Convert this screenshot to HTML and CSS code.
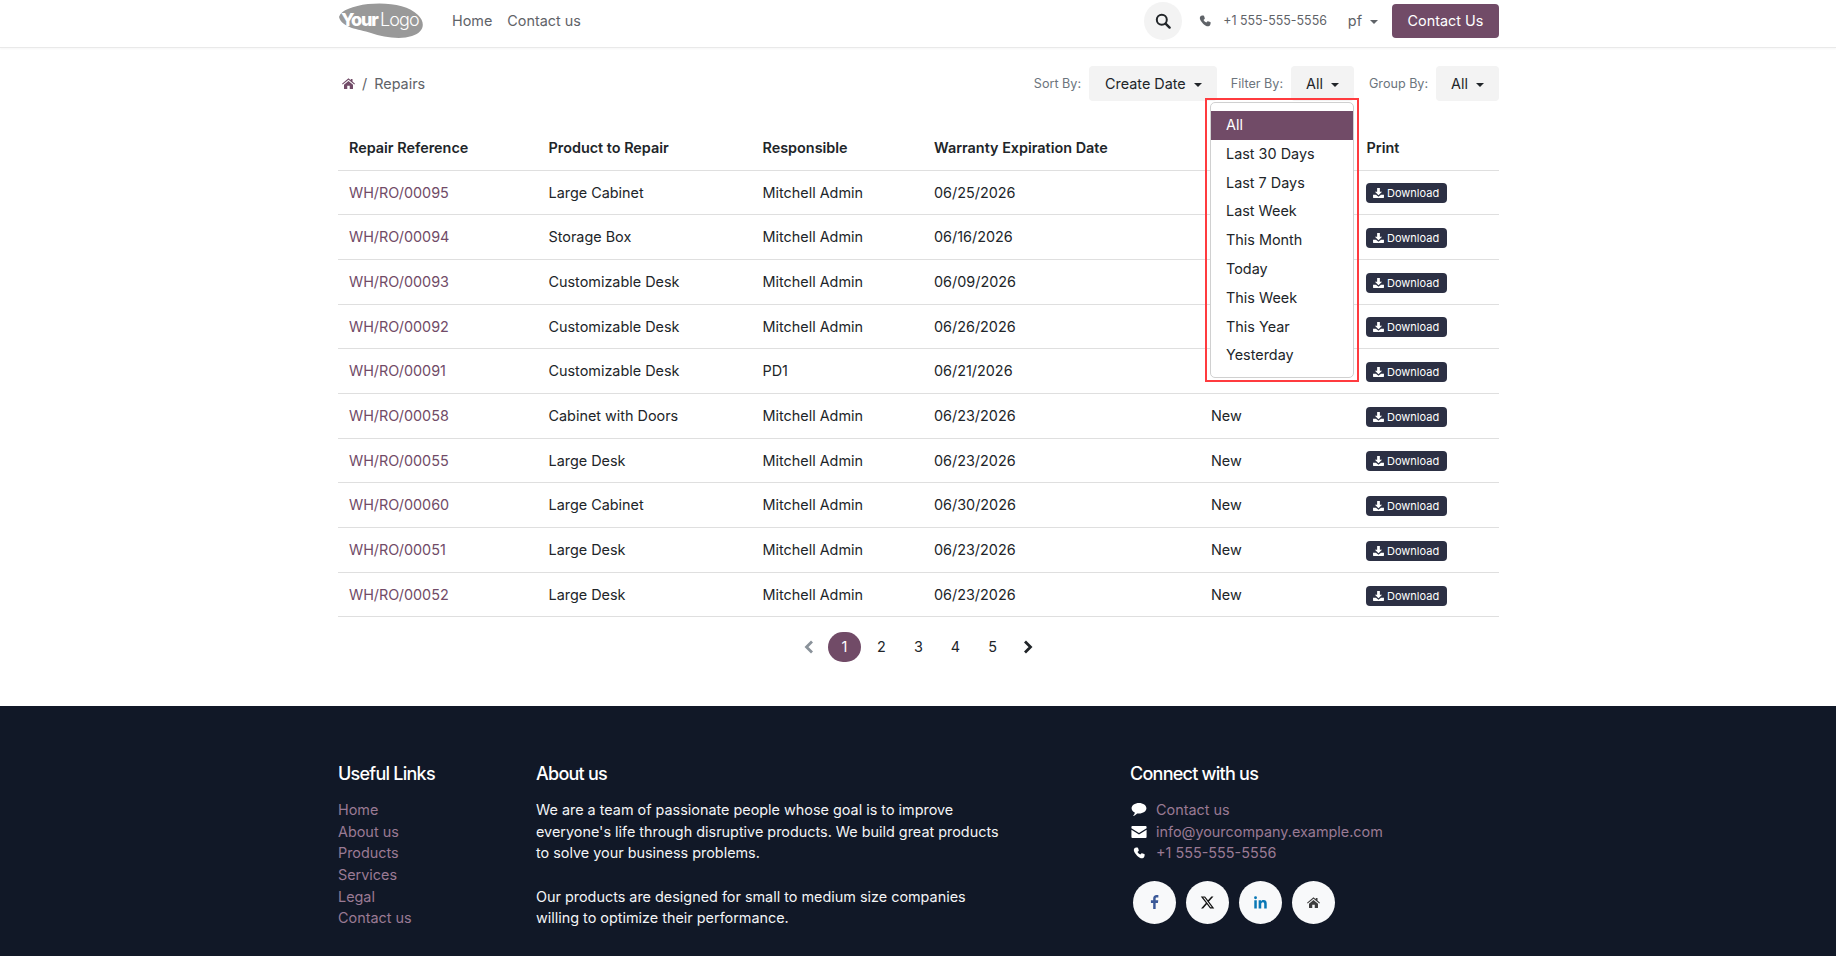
FILE: index.html
```html
<!DOCTYPE html>
<html lang="en">

<head>
    <meta charset="UTF-8">
    <meta name="viewport" content="width=device-width, initial-scale=1.0">
    <title>Repairs</title>
    <link rel="stylesheet" href="styles.css">
</head>

<body>

    <svg class="icon-defs" width="0" height="0">
        <symbol id="i-home" viewBox="0 0 26 22">
            <path d="M13 0.5 L17.5 4.3 V1.8 H21 V7.2 L26 11.4 L24.6 13 L13 3.4 L1.4 13 L0 11.4 Z M4 13.4 L13 6 L22 13.4 V21 Q22 22 21 22 H15.5 V15.5 H10.5 V22 H5 Q4 22 4 21 Z" fill="currentColor"/>
        </symbol>
        <symbol id="i-phone" viewBox="0 0 24 24">
            <path d="M6.2 1.2 L9 1 Q9.8 1 10.1 1.8 L11.6 6.6 Q11.8 7.3 11.2 7.8 L9 9.8 Q10.8 13.5 14.6 15.2 L16.6 13 Q17.1 12.4 17.9 12.7 L22.6 14.2 Q23.3 14.5 23.3 15.3 L23 18.2 Q22.6 21.6 19.2 22.6 Q16.8 23.2 12.6 20.8 Q7.4 18 3.8 12.2 Q1 7.4 1.7 4.8 Q2.6 1.6 6.2 1.2 Z" fill="currentColor"/>
        </symbol>
        <symbol id="i-download" viewBox="0 0 24 22">
            <path d="M9 0 H15 V8 H20 L12 16 L4 8 H9 Z M0 15 H6.5 L12 19.5 L17.5 15 H24 V21 Q24 22 23 22 H1 Q0 22 0 21 Z" fill="currentColor"/>
        </symbol>
    </svg>

    <header class="site-header">
        <div class="container header-row">
            <a class="logo" href="#">
                <svg width="86" height="36" viewBox="0 0 86 36">
                    <path d="M1 14 C3 7 15 3 30 1 C50 -1 70 2 80 12 C88 20 86 29 74 33 C62 37 45 34 33 30 C20 26 4 25 1 14 Z" fill="#999"/>
                    <text class="logo-your" x="3" y="23">Your</text>
                    <text class="logo-word" x="42" y="23">Logo</text>
                </svg>
            </a>
            <nav class="main-nav">
                <a href="#">Home</a>
                <a href="#">Contact us</a>
            </nav>
            <div class="header-right">
                <a class="search-btn" href="#">
                    <svg width="16" height="16" viewBox="0 0 16 16">
                        <circle cx="6.8" cy="6.8" r="5" fill="none" stroke="currentColor" stroke-width="2"/>
                        <path d="M10.6 10.6 L14.6 14.6" stroke="currentColor" stroke-width="2.4" stroke-linecap="round"/>
                    </svg>
                </a>
                <a class="header-phone" href="#">
                    <svg width="12" height="12"><use href="#i-phone"/></svg>
                    <span>+1 555-555-5556</span>
                </a>
                <a class="lang" href="#">pf<span class="caret"></span></a>
                <a class="contact-btn" href="#">Contact Us</a>
            </div>
        </div>
    </header>

    <main class="container">
        <div class="toolbar">
            <div class="breadcrumb">
                <svg class="bc-home" width="13" height="11"><use href="#i-home"/></svg>
                <span class="bc-sep">/</span>
                <span>Repairs</span>
            </div>
            <div class="filters">
                <span class="filter-label">Sort By:</span>
                <a class="filter-btn sort-btn" href="#">Create Date<span class="caret"></span></a>
                <span class="filter-label">Filter By:</span>
                <div class="filter-wrap">
                    <a class="filter-btn" href="#">All<span class="caret"></span></a>
                    <div class="highlight-box"></div>
                    <ul class="filter-menu">
                        <li class="active">All</li>
                        <li>Last 30 Days</li>
                        <li>Last 7 Days</li>
                        <li>Last Week</li>
                        <li>This Month</li>
                        <li>Today</li>
                        <li>This Week</li>
                        <li>This Year</li>
                        <li>Yesterday</li>
                    </ul>
                </div>
                <span class="filter-label">Group By:</span>
                <a class="filter-btn" href="#">All<span class="caret"></span></a>
            </div>
        </div>

        <table class="repairs-table">
            <colgroup>
                <col class="col-ref">
                <col class="col-product">
                <col class="col-resp">
                <col class="col-date">
                <col class="col-status">
                <col>
            </colgroup>
            <thead>
                <tr>
                    <th>Repair Reference</th>
                    <th>Product to Repair</th>
                    <th>Responsible</th>
                    <th>Warranty Expiration Date</th>
                    <th></th>
                    <th>Print</th>
                </tr>
            </thead>
            <tbody id="rows"></tbody>
        </table>

        <div class="pager">
            <a class="pager-arrow muted" href="#">
                <svg width="10" height="14" viewBox="0 0 10 14"><path d="M8 1.5 L2.5 7 L8 12.5" fill="none" stroke="currentColor" stroke-width="2.8"/></svg>
            </a>
            <a class="page-num current" href="#">1</a>
            <a class="page-num" href="#">2</a>
            <a class="page-num" href="#">3</a>
            <a class="page-num" href="#">4</a>
            <a class="page-num" href="#">5</a>
            <a class="pager-arrow" href="#">
                <svg width="10" height="14" viewBox="0 0 10 14"><path d="M2 1.5 L7.5 7 L2 12.5" fill="none" stroke="currentColor" stroke-width="2.8"/></svg>
            </a>
        </div>
    </main>

    <footer class="site-footer">
        <div class="container footer-row">
            <div class="footer-links">
                <h5>Useful Links</h5>
                <a href="#">Home</a>
                <a href="#">About us</a>
                <a href="#">Products</a>
                <a href="#">Services</a>
                <a href="#">Legal</a>
                <a href="#">Contact us</a>
            </div>
            <div class="footer-about">
                <h5>About us</h5>
                <p>We are a team of passionate people whose goal is to improve everyone's life through disruptive products. We build great products to solve your business problems.</p>
                <p>Our products are designed for small to medium size companies willing to optimize their performance.</p>
            </div>
            <div class="footer-connect">
                <h5>Connect with us</h5>
                <a href="#">
                    <svg width="15" height="13" viewBox="0 0 24 21"><path d="M12 0 C18.6 0 24 3.8 24 8.5 C24 13.2 18.6 17 12 17 C11 17 10 16.9 9 16.8 C7.4 18.6 5 20.4 2.4 20.8 C4 19.2 5 17.6 5.2 15.4 C2 13.9 0 11.4 0 8.5 C0 3.8 5.4 0 12 0 Z" fill="currentColor"/></svg>
                    <span>Contact us</span>
                </a>
                <a href="#">
                    <svg width="15" height="12" viewBox="0 0 24 19"><path d="M1.5 0 H22.5 Q24 0 24 1.5 V3.4 L12 11 L0 3.4 V1.5 Q0 0 1.5 0 Z M0 6 L12 13.6 L24 6 V17.5 Q24 19 22.5 19 H1.5 Q0 19 0 17.5 Z" fill="currentColor"/></svg>
                    <span>info@yourcompany.example.com</span>
                </a>
                <a href="#">
                    <svg width="12" height="12"><use href="#i-phone"/></svg>
                    <span>+1 555-555-5556</span>
                </a>
                <div class="social">
                    <a class="social-fb" href="#">
                        <svg width="9" height="14" viewBox="0 0 9 16"><path d="M3 16 V9 H0.4 V6 H3 V4 C3 1.4 4.6 0 6.8 0 C7.8 0 8.6 0.1 8.9 0.1 V2.8 H7.3 C6 2.8 5.8 3.4 5.8 4.3 V6 H8.8 L8.4 9 H5.8 V16 Z" fill="currentColor"/></svg>
                    </a>
                    <a class="social-x" href="#">
                        <svg width="15" height="15" viewBox="0 0 512 512"><path d="M389.2 48h70.6L305.6 224.2 487 464H345L233.7 318.6 106.5 464H35.8L200.7 275.5 26.8 48H172.4L272.9 180.9 389.2 48zM364.4 421.8h39.1L151.1 88h-42L364.4 421.8z" fill="currentColor"/></svg>
                    </a>
                    <a class="social-in" href="#">
                        <svg width="13" height="13" viewBox="0 0 14 14"><path d="M0.3 4.6 H3 V13.5 H0.3 Z M1.65 0.4 A1.55 1.55 0 1 1 1.65 3.5 A1.55 1.55 0 1 1 1.65 0.4 Z M5 4.6 H7.6 V5.8 C8 5 9 4.4 10.3 4.4 C13 4.4 13.7 6.1 13.7 8.4 V13.5 H11 V9 C11 7.9 11 6.6 9.6 6.6 C8.2 6.6 7.8 7.7 7.8 9 V13.5 H5 Z" fill="currentColor"/></svg>
                    </a>
                    <a class="social-home" href="#">
                        <svg width="13" height="11"><use href="#i-home"/></svg>
                    </a>
                </div>
            </div>
        </div>
    </footer>

    <script>
        // the first five states sit under the open filter menu
        const repairs = [
            ['WH/RO/00095', 'Large Cabinet', 'Mitchell Admin', '06/25/2026', ''],
            ['WH/RO/00094', 'Storage Box', 'Mitchell Admin', '06/16/2026', ''],
            ['WH/RO/00093', 'Customizable Desk', 'Mitchell Admin', '06/09/2026', ''],
            ['WH/RO/00092', 'Customizable Desk', 'Mitchell Admin', '06/26/2026', ''],
            ['WH/RO/00091', 'Customizable Desk', 'PD1', '06/21/2026', ''],
            ['WH/RO/00058', 'Cabinet with Doors', 'Mitchell Admin', '06/23/2026', 'New'],
            ['WH/RO/00055', 'Large Desk', 'Mitchell Admin', '06/23/2026', 'New'],
            ['WH/RO/00060', 'Large Cabinet', 'Mitchell Admin', '06/30/2026', 'New'],
            ['WH/RO/00051', 'Large Desk', 'Mitchell Admin', '06/23/2026', 'New'],
            ['WH/RO/00052', 'Large Desk', 'Mitchell Admin', '06/23/2026', 'New']
        ];

        const tbody = document.getElementById('rows');
        repairs.forEach(function (r) {
            const tr = document.createElement('tr');
            tr.innerHTML = `<td><a href="#">${r[0]}</a></td><td>${r[1]}</td><td>${r[2]}</td><td>${r[3]}</td><td>${r[4]}</td>` +
                `<td><a class="download-btn" href="#"><svg width="11" height="10"><use href="#i-download"/></svg>Download</a></td>`;
            tbody.appendChild(tr);
        });
    </script>

</body>

</html>
```

FILE: styles.css
```css
* {
    box-sizing: border-box;
}

body {
    font-family: Inter, "Liberation Sans", sans-serif;
    font-size: 14.4px;
    line-height: 21.6px;
    color: #212529;
    background-color: #fff;
    margin: 0;
}

a {
    color: inherit;
    text-decoration: none;
}

.icon-defs {
    display: block;
    height: 0;
}

.container {
    width: 1161px;
    margin-left: 338px;
}

.caret {
    display: inline-block;
    width: 0;
    height: 0;
    margin-left: 8px;
    vertical-align: 2px;
    border-top: 4px solid currentColor;
    border-left: 4px solid transparent;
    border-right: 4px solid transparent;
}

/* header */
.site-header {
    height: 48px;
    border-bottom: 1px solid #e9e9e9;
    box-shadow: 0 1px 2px rgba(0, 0, 0, 0.04);
}

.header-row {
    display: flex;
    align-items: center;
    height: 42px;
}

.logo {
    display: flex;
    width: 114px;
}

.logo-your {
    font-size: 18px;
    font-weight: 800;
    letter-spacing: -1.2px;
    fill: #fff;
}

.logo-word {
    font-size: 18px;
    font-weight: 300;
    letter-spacing: -0.9px;
    fill: #fff;
}

.main-nav {
    display: flex;
    gap: 15px;
    color: #5f6368;
}

.header-right {
    display: flex;
    align-items: center;
    margin-left: auto;
    color: #5f6368;
}

.search-btn {
    display: flex;
    align-items: center;
    justify-content: center;
    width: 38px;
    height: 38px;
    margin-right: 17px;
    border-radius: 50%;
    background-color: #f3f3f3;
    color: #212529;
}

.header-phone {
    display: flex;
    align-items: center;
    gap: 12px;
    margin-right: 21px;
    font-size: 12.4px;
}

.lang {
    margin-right: 14px;
}

.lang .caret {
    vertical-align: 2px;
}

.contact-btn {
    display: block;
    width: 107px;
    height: 34px;
    line-height: 33px;
    text-align: center;
    border-radius: 4px;
    background-color: #714b67;
    color: #fff;
}

/* toolbar */
.toolbar {
    display: flex;
    justify-content: space-between;
    align-items: center;
    height: 35px;
    margin-top: 18px;
}

.breadcrumb {
    display: flex;
    align-items: center;
    padding-left: 4px;
    color: #5f6368;
}

.bc-home {
    color: #714b67;
}

.bc-sep {
    margin: 0 7px 0 7px;
}

.filters {
    display: flex;
    align-items: center;
}

.filter-label {
    margin-right: 8px;
    font-size: 12.6px;
    color: #6c757d;
}

.filter-btn {
    display: block;
    height: 35px;
    line-height: 35px;
    padding: 0 15px;
    border-radius: 4px;
    background-color: #f3f3f3;
}

.sort-btn {
    margin-right: 14px;
    padding-left: 16px;
}

.filter-wrap {
    position: relative;
    margin-right: 15px;
}

.highlight-box {
    position: absolute;
    left: -86px;
    top: 32px;
    width: 154px;
    height: 284px;
    border: 2px solid #ff3b3f;
}

.filter-menu {
    position: absolute;
    left: -81px;
    top: 36px;
    width: 144px;
    height: 276px;
    margin: 0;
    padding: 8px 0 0;
    list-style: none;
    background-color: #fff;
    border: 1px solid #d0d0d0;
    border-radius: 5px;
}

.filter-menu li {
    height: 28.8px;
    line-height: 28.8px;
    padding-left: 15px;
}

.filter-menu li.active {
    background-color: #714b67;
    color: #fff;
}

/* table */
.repairs-table {
    width: 100%;
    margin-top: 24px;
    table-layout: fixed;
    border-collapse: collapse;
}

.col-ref {
    width: 199.5px;
}

.col-product {
    width: 214px;
}

.col-resp {
    width: 171.5px;
}

.col-date {
    width: 277px;
}

.col-status {
    width: 155.5px;
}

.repairs-table th {
    height: 45px;
    padding: 2px 10.5px 0 11px;
    text-align: left;
    font-weight: 600;
}

.repairs-table td {
    height: 44.7px;
    padding: 0 10.5px 0 11px;
    border-top: 1px solid #dfdfdf;
}

.repairs-table tbody tr:last-child td {
    border-bottom: 1px solid #dfdfdf;
}

.repairs-table td a:not(.download-btn) {
    color: #714b67;
}

.download-btn {
    display: inline-flex;
    align-items: center;
    gap: 3px;
    height: 20px;
    margin-top: 2px;
    margin-left: -1px;
    padding: 0 7.5px;
    font-size: 11px;
    line-height: 20px;
    border-radius: 4px;
    background-color: #2c3044;
    color: #fff;
    vertical-align: top;
}

/* pagination */
.pager {
    display: flex;
    justify-content: center;
    align-items: center;
    height: 30px;
    margin-top: 15px;
    margin-bottom: 44px;
}

.page-num {
    display: block;
    width: 33px;
    height: 30px;
    line-height: 30px;
    margin: 0 2px;
    text-align: center;
    border-radius: 15px;
}

.page-num.current {
    background-color: #714b67;
    color: #fff;
}

.pager-arrow {
    display: flex;
    justify-content: center;
    width: 34px;
}

.pager-arrow.muted {
    color: #8a929a;
}

/* footer */
.site-footer {
    height: 250px;
    padding-top: 56px;
    background-color: #111827;
    color: #f3f4f6;
}

.footer-row {
    display: flex;
}

.site-footer h5 {
    margin: 0 0 12.8px;
    font-size: 18px;
    line-height: 24px;
    font-weight: 500;
    letter-spacing: -0.75px;
    color: #fff;
}

.footer-links {
    width: 198px;
}

.footer-links a {
    display: block;
    color: #9a7a94;
}

.footer-about {
    width: 594px;
}

.footer-about p {
    width: 470px;
    margin: 0 0 21.6px;
}

.footer-connect {
    flex: 1;
}

.footer-connect > a {
    display: flex;
    align-items: center;
    color: #9a7a94;
}

.footer-connect > a svg {
    width: 18px;
    margin-right: 8px;
    color: #fff;
}

.social {
    display: flex;
    gap: 10px;
    margin-top: 17px;
    margin-left: 3px;
}

.social a {
    display: flex;
    align-items: center;
    justify-content: center;
    width: 43px;
    height: 43px;
    border-radius: 50%;
    background-color: #f8f9fa;
}

.social-fb {
    color: #3b5998;
}

.social-x {
    color: #111;
}

.social-in {
    color: #0a78b5;
}

.social-home {
    color: #3d3d3d;
}
```
